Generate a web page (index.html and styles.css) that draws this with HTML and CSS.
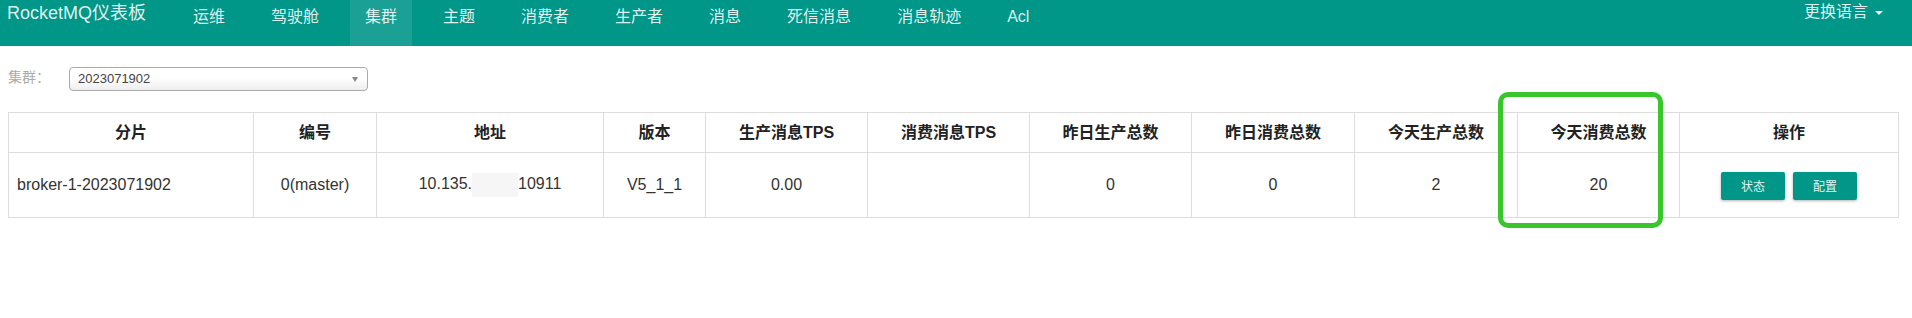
FILE: index.html
```html
<!DOCTYPE html>
<html lang="zh-CN">
<head>
<meta charset="utf-8">
<title>RocketMQ仪表板</title>
<link rel="stylesheet" href="styles.css">
</head>
<body>
<header class="navbar">
  <div class="brand">RocketMQ仪表板</div>
  <ul class="nav">
    <li class="nav-item">运维</li>
    <li class="nav-item">驾驶舱</li>
    <li class="nav-item active">集群</li>
    <li class="nav-item">主题</li>
    <li class="nav-item">消费者</li>
    <li class="nav-item">生产者</li>
    <li class="nav-item">消息</li>
    <li class="nav-item">死信消息</li>
    <li class="nav-item">消息轨迹</li>
    <li class="nav-item">Acl</li>
  </ul>
  <div class="lang">更换语言<span class="caret"></span></div>
</header>

<main class="content">
  <div class="filter">
    <label class="filter-label">集群：</label>
    <div class="select">
      <span class="select-value">2023071902</span>
      <span class="select-arrow"></span>
    </div>
  </div>

  <table class="grid">
    <colgroup>
      <col class="c-shard"><col class="c-no"><col class="c-addr"><col class="c-ver">
      <col class="c-num"><col class="c-num"><col class="c-num"><col class="c-num2">
      <col class="c-num2"><col class="c-num"><col class="c-op">
    </colgroup>
    <thead>
      <tr>
        <th>分片</th><th>编号</th><th>地址</th><th>版本</th><th>生产消息TPS</th><th>消费消息TPS</th>
        <th>昨日生产总数</th><th>昨日消费总数</th><th>今天生产总数</th><th>今天消费总数</th><th>操作</th>
      </tr>
    </thead>
    <tbody>
      <tr>
        <td class="left">broker-1-2023071902</td>
        <td>0(master)</td>
        <td>10.135.<span class="mask"></span>10911</td>
        <td>V5_1_1</td>
        <td>0.00</td>
        <td></td>
        <td>0</td>
        <td>0</td>
        <td>2</td>
        <td>20</td>
        <td><div class="ops"><button class="btn">状态</button><button class="btn">配置</button></div></td>
      </tr>
    </tbody>
  </table>
</main>

<div class="highlight"></div>
</body>
</html>
```

FILE: styles.css
```css
* { box-sizing: border-box; }

html, body {
  margin: 0;
  padding: 0;
  background: #fff;
  font-family: "Liberation Sans", "Noto Sans CJK SC", sans-serif;
  color: #333;
}

.navbar {
  display: flex;
  align-items: flex-start;
  height: 46px;
  background: #009688;
  color: rgba(255, 255, 255, 0.88);
}

.brand {
  width: 170px;
  margin-left: 7px;
  font-size: 18px;
  line-height: 26px;
  white-space: nowrap;
}

.nav {
  display: flex;
  list-style: none;
  margin: 0;
  padding: 0;
  margin-left: 1px;
}

.nav-item {
  height: 46px;
  padding: 0 15px;
  margin-right: 16px;
  font-size: 16px;
  line-height: 33px;
  white-space: nowrap;
}

.nav-item.active {
  background: rgba(255, 255, 255, 0.1);
}

.lang {
  margin-left: auto;
  padding-right: 29px;
  font-size: 16px;
  line-height: 24px;
  display: flex;
  align-items: center;
}

.caret {
  display: inline-block;
  width: 0;
  height: 0;
  margin-left: 7px;
  margin-top: 2px;
  border-left: 4px solid transparent;
  border-right: 4px solid transparent;
  border-top: 4px solid rgba(255, 255, 255, 0.9);
}

.content {
  padding: 21px 15px 0 8px;
}

.filter {
  display: flex;
  align-items: flex-start;
  height: 24px;
}

.filter-label {
  width: 61px;
  font-size: 14px;
  line-height: 20px;
  color: #aaa;
}

.select {
  position: relative;
  width: 299px;
  height: 24px;
  border: 1px solid #aaa;
  border-radius: 4px;
  background: linear-gradient(to bottom, #ffffff 45%, #eeeeee 100%);
  display: flex;
  align-items: center;
  padding-left: 8px;
}

.select-value {
  font-size: 13px;
  color: #444;
  line-height: 22px;
}

.select-arrow {
  margin-left: auto;
  margin-right: 9px;
  width: 0;
  height: 0;
  border-left: 3px solid transparent;
  border-right: 3px solid transparent;
  border-top: 5px solid #888;
}

.grid {
  margin-top: 21px;
  width: 1889px;
  table-layout: fixed;
  border-collapse: collapse;
  font-size: 16px;
}

.c-shard { width: 245px; }
.c-no { width: 123px; }
.c-addr { width: 227px; }
.c-ver { width: 102px; }
.c-num { width: 162px; }
.c-num2 { width: 163px; }
.c-op { width: 219px; }

.grid th,
.grid td {
  border: 1px solid #ddd;
  text-align: center;
  vertical-align: middle;
  white-space: nowrap;
}

.grid th {
  height: 40px;
  padding: 0 8px;
  font-weight: bold;
  color: #222;
  line-height: 22px;
}

.grid td {
  height: 65px;
  padding: 0 8px;
  color: #333;
  line-height: 22px;
}

.grid td.left {
  text-align: left;
}

.mask {
  display: inline-block;
  width: 46px;
  height: 24px;
  vertical-align: middle;
  background: #f6f6f6;
}

.ops {
  display: flex;
  justify-content: center;
  gap: 8px;
  padding-top: 1px;
}

.btn {
  width: 64px;
  height: 28px;
  border: none;
  border-radius: 2px;
  background: #009688;
  color: rgba(255, 255, 255, 0.9);
  font-family: "Liberation Sans", "Noto Sans CJK SC", sans-serif;
  font-size: 12px;
  box-shadow: 0 1px 3px rgba(0, 0, 0, 0.3);
  padding: 0;
}

.highlight {
  position: absolute;
  left: 1498px;
  top: 92px;
  width: 165px;
  height: 136px;
  border: 5px solid #38c62c;
  border-radius: 10px;
  pointer-events: none;
}
```
